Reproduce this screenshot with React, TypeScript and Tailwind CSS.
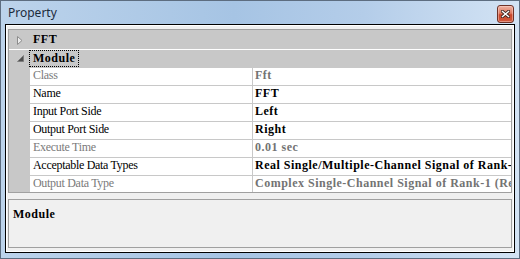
type Row = { label: string; value: string; dim?: boolean };

const rows: Row[] = [
  { label: 'Class', value: 'Fft', dim: true },
  { label: 'Name', value: 'FFT' },
  { label: 'Input Port Side', value: 'Left' },
  { label: 'Output Port Side', value: 'Right' },
  { label: 'Execute Time', value: '0.01 sec', dim: true },
  { label: 'Acceptable Data Types', value: 'Real Single/Multiple-Channel Signal of Rank-1 (Real Array)' },
  { label: 'Output Data Type', value: 'Complex Single-Channel Signal of Rank-1 (Real Array)', dim: true },
];

const serif = "font-['Liberation_Serif','Times_New_Roman',serif]";

const CloseButton = () => (
  <div className="mt-[5px] mr-[1px] flex h-[18px] w-[17px] items-center justify-center rounded-[3px] border border-[#6e3228] bg-[linear-gradient(180deg,#eeb2a2_0%,#de7a62_45%,#c8452b_55%,#d0593c_100%)] shadow-[inset_0_0_0_1px_rgba(255,220,210,0.45)]">
    <svg width="9" height="8" viewBox="0 0 9 8">
      <path d="M1.5 1.5 L7.5 6.5 M7.5 1.5 L1.5 6.5" stroke="#3b2320" strokeWidth="3.2" strokeLinecap="square" />
      <path d="M1.5 1.5 L7.5 6.5 M7.5 1.5 L1.5 6.5" stroke="#ffffff" strokeWidth="1.5" strokeLinecap="square" />
    </svg>
  </div>
);

const PropertyRow = ({ row }: { row: Row }) => (
  <div className="flex h-[18px] shrink-0">
    <div className="w-[21px] shrink-0 bg-[#c8c8c8]" />
    <div
      className={`w-[223px] shrink-0 border-r border-b border-[#c8c8c8] bg-white pl-[3px] text-[12px] leading-[14px] tracking-[-0.3px] whitespace-nowrap ${
        row.dim ? 'text-[#7a7a7a]' : 'text-black'
      }`}
    >
      {row.label}
    </div>
    <div
      className={`min-w-0 flex-1 overflow-hidden border-b border-[#c8c8c8] bg-white pl-[2px] text-[12px] leading-[14px] font-bold tracking-[0.5px] whitespace-nowrap ${
        row.dim ? 'text-[#737373]' : 'text-black'
      }`}
    >
      {row.value}
    </div>
  </div>
);

export default function App() {
  return (
    <div className="flex h-[259px] w-[520px] flex-col bg-[linear-gradient(90deg,#bcd3eb_0%,#a6c4e4_45%,#b4cde9_70%,#d3e3f4_100%)] px-[5px] pb-[6px] shadow-[inset_0_0_0_1px_#5d6d80]">
      <div className="flex h-[24px] shrink-0 justify-between">
        <span className="pt-[5px] pl-[3px] font-['Noto_Sans','Liberation_Sans',sans-serif] text-[12px] leading-[16px] text-[#1c2b3c]">
          Property
        </span>
        <CloseButton />
      </div>

      <div className={`flex min-h-0 flex-1 flex-col border border-black bg-[#f0f0f0] px-[2px] py-[4px] shadow-[inset_0_0_0_1px_#ffffff] ${serif}`}>
        <div className="flex h-[164px] shrink-0 flex-col overflow-hidden border border-[#a0a0a0] bg-[#c8c8c8]">
          <div className="flex h-[20px] shrink-0 items-start border-b border-white">
            <div className="flex w-[21px] shrink-0 justify-start pt-[6px] pl-[8px]">
              <svg width="6" height="9" viewBox="0 0 6 9">
                <polygon points="0.5,0.5 5,4.5 0.5,8.5" fill="#ececec" stroke="#8c8c8c" strokeWidth="1" />
              </svg>
            </div>
            <span className="pt-[2px] pl-[3px] text-[12px] leading-[14px] font-bold tracking-[0.5px] text-black">FFT</span>
          </div>

          <div className="flex h-[18px] shrink-0 items-start">
            <div className="flex w-[21px] shrink-0 pt-[5px] pl-[8px]">
              <svg width="7" height="7" viewBox="0 0 7 7">
                <polygon points="6.5,0.5 6.5,6.5 0.5,6.5" fill="#4f4f4f" stroke="#7a7a7a" strokeWidth="0.8" />
              </svg>
            </div>
            <span className="-ml-[1px] border border-dotted border-black px-[3px] text-[12px] leading-[15px] font-bold tracking-[0.5px] text-black">
              Module
            </span>
          </div>

          {rows.map((row, index) => (
            <PropertyRow key={index} row={row} />
          ))}
        </div>

        <div className="h-[6px] shrink-0" />

        <div className="h-[49px] shrink-0 border border-[#a0a0a0] bg-[#f0f0f0] pt-[1px] pl-[4px]">
          <span className="text-[12px] leading-[14px] font-bold tracking-[0.5px] text-black">Module</span>
        </div>
      </div>
    </div>
  );
}
